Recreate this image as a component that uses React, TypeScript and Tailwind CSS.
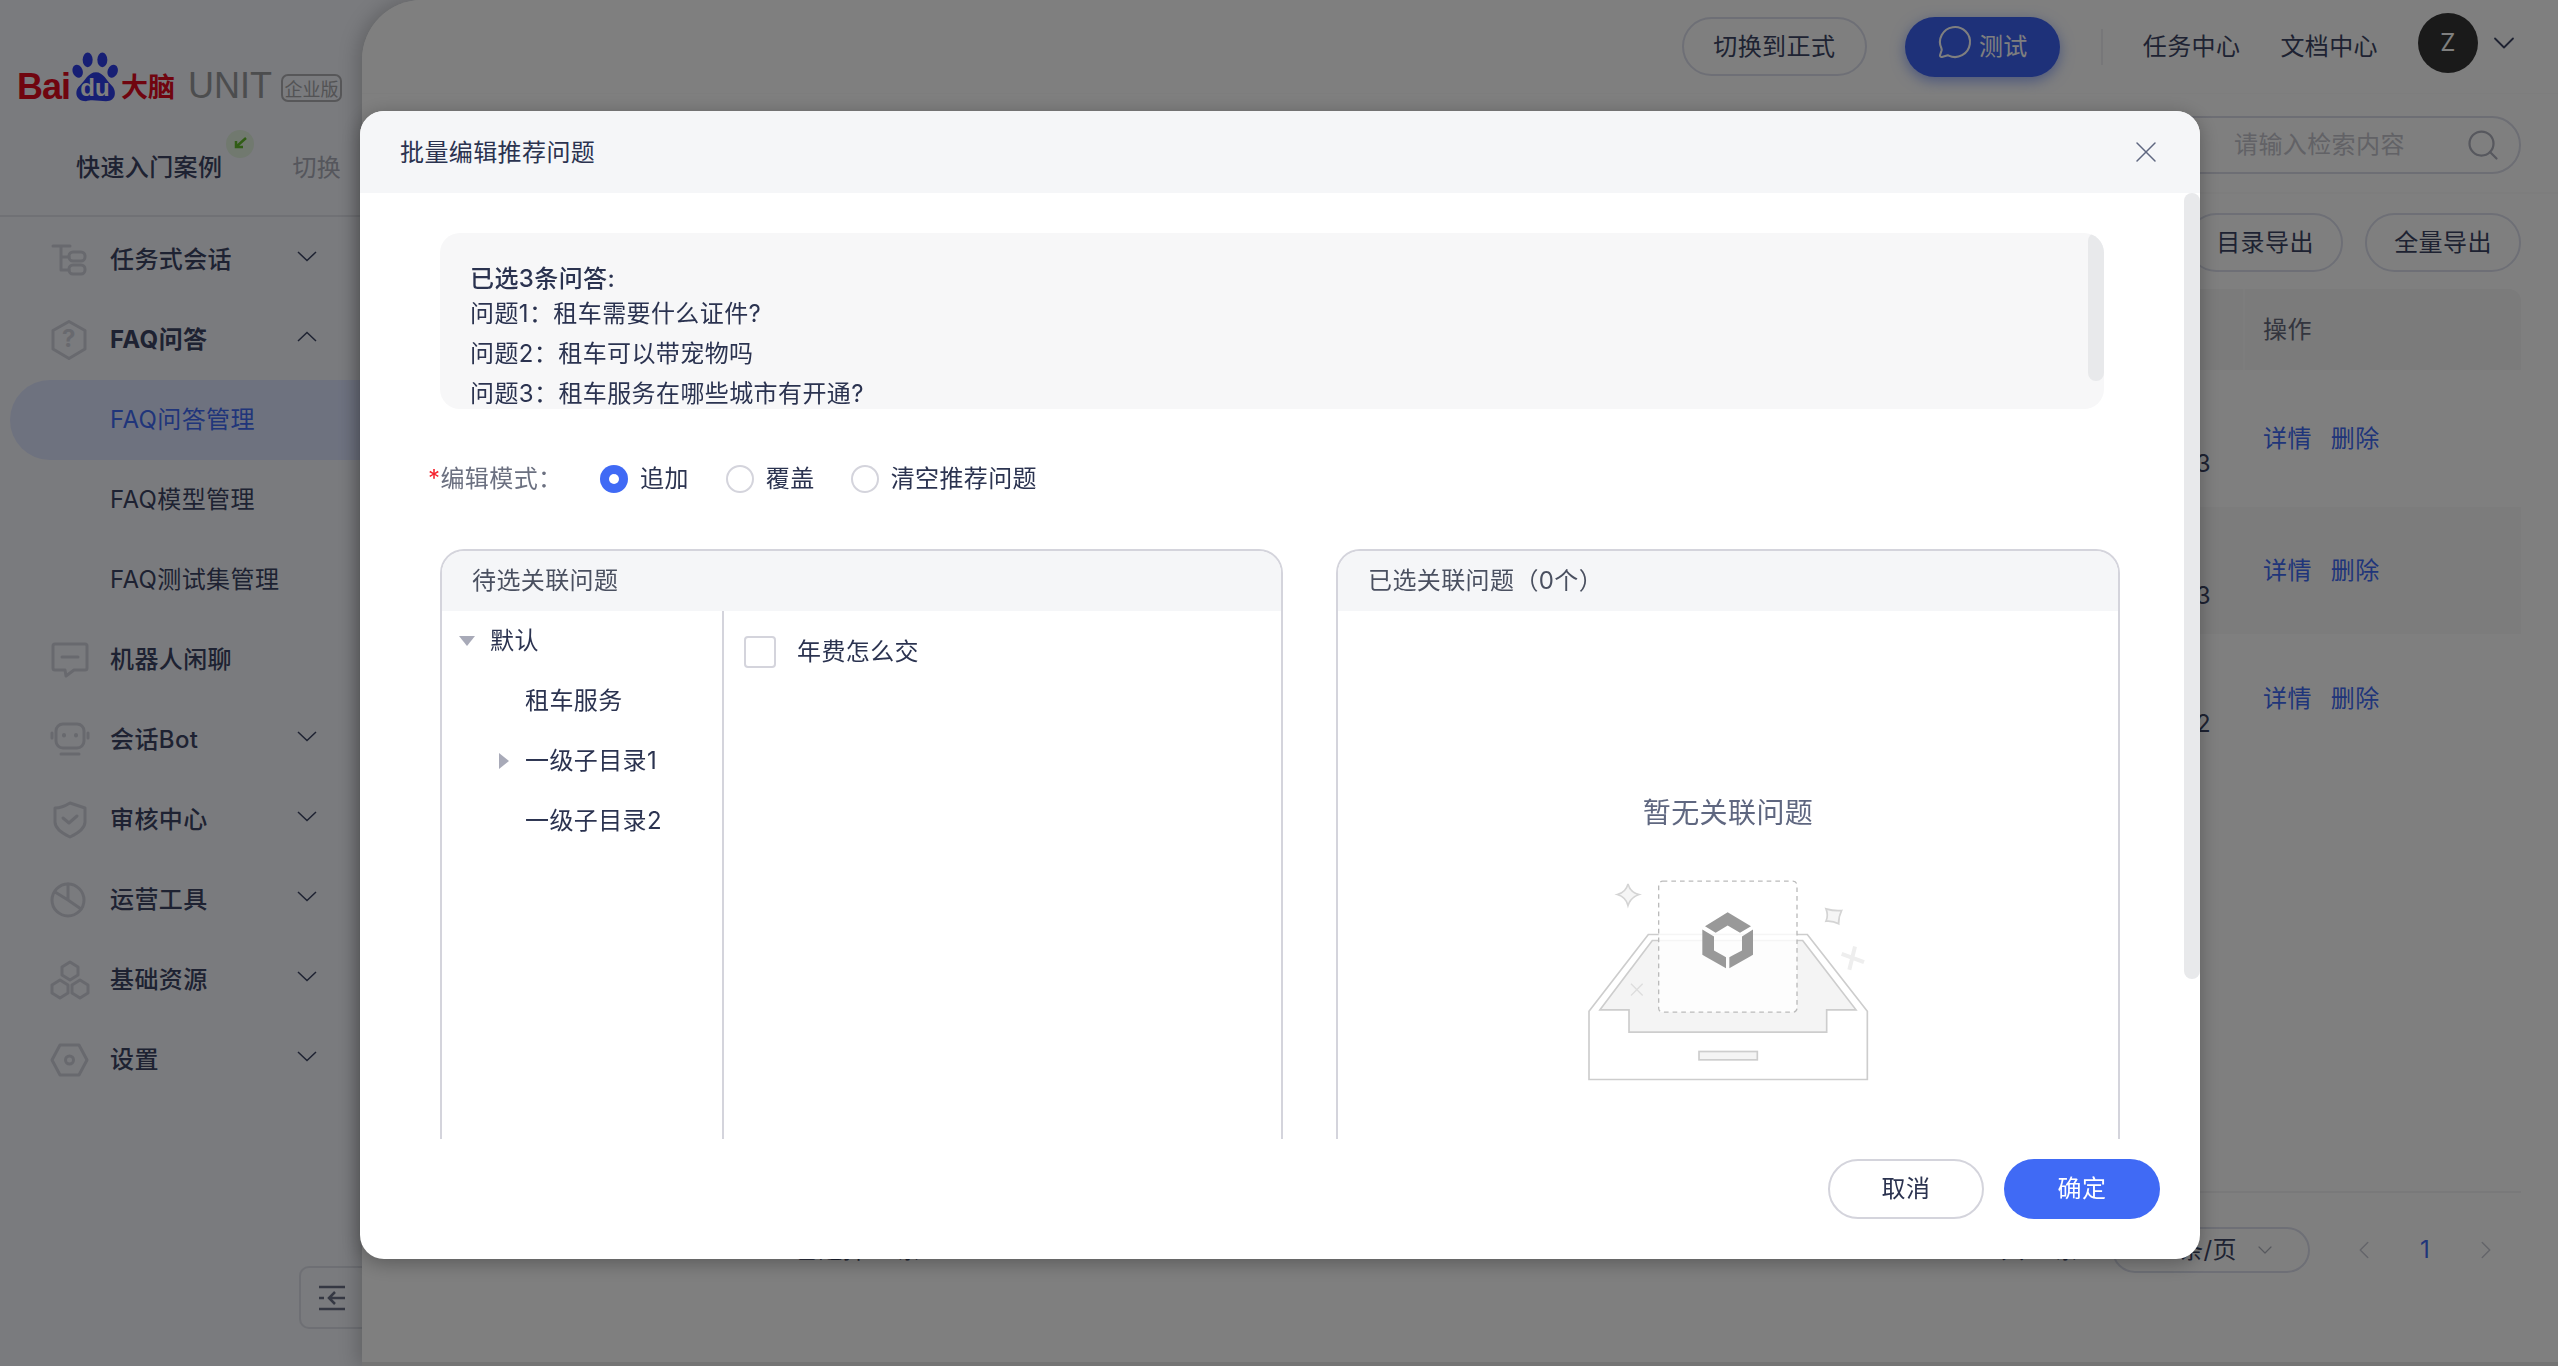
import { ChevronDown, ChevronLeft, ChevronRight, MessageCircle, Search, X } from "lucide-react";
import type { ReactNode } from "react";

const iconStroke = "#d0d2dc";

function Chev({ up = false }: { up?: boolean }) {
  return (
    <svg width="20" height="11" viewBox="0 0 20 11" fill="none" className="-mt-2 shrink-0">
      <path d={up ? "M1 10L10 1.5L19 10" : "M1 1L10 9.5L19 1"} stroke="#3c4564" strokeWidth="1.5" />
    </svg>
  );
}

function MenuIcon({ children }: { children: ReactNode }) {
  return (
    <svg width="40" height="40" viewBox="0 0 40 40" fill="none" stroke={iconStroke} strokeWidth="3" strokeLinejoin="round" strokeLinecap="round">
      {children}
    </svg>
  );
}

const icons: Record<string, ReactNode> = {
  task: (
    <MenuIcon>
      <path d="M3 6H20M11 6V30H19M11 17H19" />
      <rect x="19" y="12" width="16" height="9" rx="4" />
      <rect x="19" y="25" width="16" height="9" rx="4" />
    </MenuIcon>
  ),
  faq: (
    <MenuIcon>
      <path d="M19 1.5L35 10.5V29L19 38.5L3 29V10.5Z" />
      <text x="19" y="27" textAnchor="middle" fontSize="24" fontWeight="700" fill={iconStroke} stroke="none">?</text>
    </MenuIcon>
  ),
  chat: (
    <MenuIcon>
      <path d="M5 4H35Q37 4 37 6V28Q37 30 35 30H24L16 36L15 30H5Q3 30 3 28V6Q3 4 5 4Z" />
      <path d="M12 17H28" />
    </MenuIcon>
  ),
  bot: (
    <MenuIcon>
      <rect x="6" y="4" width="28" height="24" rx="7" />
      <path d="M2 13V18M38 13V18M11 34H29" />
      <path d="M14 15V15.5M26 15V15.5" strokeWidth="4" />
    </MenuIcon>
  ),
  shield: (
    <MenuIcon>
      <path d="M20 3L35 8V22Q35 30 20 37Q5 30 5 22V8Q12 8 20 3Z" />
      <path d="M13 18L19 23L27 16" />
    </MenuIcon>
  ),
  pie: (
    <MenuIcon>
      <circle cx="18" cy="20" r="16" />
      <path d="M18 4V20L5 12M18 20L31 29" />
    </MenuIcon>
  ),
  base: (
    <MenuIcon>
      <path d="M20 2L28 7V15L20 20L12 15V7Z" />
      <path d="M10 20L18 25V33L10 38L2 33V25Z" />
      <path d="M30 20L38 25V33L30 38L22 33V25Z" />
    </MenuIcon>
  ),
  set: (
    <MenuIcon>
      <path d="M10 5H29L37 20L29 35H10L2 20Z" />
      <circle cx="19.5" cy="20" r="4" />
    </MenuIcon>
  ),
};

type MenuRow = { label: string; icon?: string; bold?: boolean; chev?: "up" | "down"; active?: boolean };

const menu: MenuRow[] = [
  { label: "任务式会话", icon: "task", chev: "down" },
  { label: "FAQ问答", icon: "faq", chev: "up", bold: true },
  { label: "FAQ问答管理", active: true },
  { label: "FAQ模型管理" },
  { label: "FAQ测试集管理" },
  { label: "机器人闲聊", icon: "chat" },
  { label: "会话Bot", icon: "bot", chev: "down" },
  { label: "审核中心", icon: "shield", chev: "down" },
  { label: "运营工具", icon: "pie", chev: "down" },
  { label: "基础资源", icon: "base", chev: "down" },
  { label: "设置", icon: "set", chev: "down" },
];

function Logo() {
  return (
    <div className="flex items-end pl-[17px] pt-[50px] h-[110px] tracking-normal [font-family:'Liberation_Sans',sans-serif]">
      <span className="text-[36px] leading-[36px] font-bold tracking-[-1px] text-[#e10a1e] mb-[5px]">Bai</span>
      <svg width="46" height="51" viewBox="216 62 138 152" className="mb-[8px] ml-[2px]">
        <ellipse cx="263" cy="88" rx="15" ry="22" fill="#2f3ee8" />
        <ellipse cx="307" cy="88" rx="15" ry="22" fill="#2f3ee8" />
        <ellipse cx="233" cy="122" rx="15" ry="20" transform="rotate(-20 233 122)" fill="#2f3ee8" />
        <ellipse cx="338" cy="122" rx="15" ry="20" transform="rotate(20 338 122)" fill="#2f3ee8" />
        <path d="M288 125C310 125 320 150 335 165C350 180 350 212 318 212C300 212 275 205 258 212C225 212 222 180 240 165C255 150 265 125 288 125Z" fill="#2f3ee8" />
        <text x="285" y="197" textAnchor="middle" fontSize="72" fontWeight="700" fill="#ffffff" fontFamily="Liberation Sans">du</text>
      </svg>
      <span className="text-[27px] leading-[36px] font-bold text-[#e10a1e] mb-[6px] ml-[3px] [font-family:'Noto_Sans_CJK_SC',sans-serif]">大脑</span>
      <span className="text-[36px] leading-[36px] text-[#999a9c] ml-[13px] mb-[6px]">UNIT</span>
      <span className="ml-[9px] mb-[8px] h-[28px] w-[61px] rounded-[7px] border-2 border-[#aeaeb2] text-[18px] leading-[24px] text-center text-[#a6a6aa] [font-family:'Noto_Sans_CJK_SC',sans-serif]">企业版</span>
    </div>
  );
}

function Sidebar() {
  return (
    <aside className="w-[362px] shrink-0 h-full flex flex-col">
      <Logo />
      <div className="h-[107px] border-b-2 border-[#e0e2ea] pl-[76px] pt-[41px] flex items-start text-[24px] leading-[34px]">
        <span className="relative font-medium text-[#3c4564]">
          快速入门案例
          <span className="absolute -top-[21px] -right-[32px] w-[28px] h-[28px] rounded-full bg-[#e2f2de] flex items-center justify-center">
            <svg width="16" height="16" viewBox="0 0 16 16" fill="none" stroke="#62bb2c" strokeWidth="2.5">
              <path d="M14 2L5 10M4 5V11H11" />
            </svg>
          </span>
        </span>
        <span className="ml-[70px] text-[#aaacb8]">切换</span>
      </div>
      <nav className="flex flex-col pt-[3px]">
        {menu.map((m) => (
          <div key={m.label} className={m.active ? "h-[80px] flex items-center ml-[10px] pl-[100px] rounded-l-full bg-[#dce4ff]" : "h-[80px] flex items-center pl-[50px] pr-[45px]"}>
            {m.icon ? <span className="w-[60px] shrink-0 flex">{icons[m.icon]}</span> : !m.active && <span className="w-[60px] shrink-0" />}
            <span className={`text-[24px] ${m.active ? "text-[#406af5]" : "text-[#3c4564]"} ${m.bold ? "font-bold" : m.icon ? "font-medium" : ""}`}>{m.label}</span>
            {m.chev && <span className="ml-auto flex"><Chev up={m.chev === "up"} /></span>}
          </div>
        ))}
      </nav>
      <div className="mt-auto mb-[37px] self-end w-[63px] h-[63px] border-2 border-r-0 border-[#dcdfe8] rounded-l-[10px] flex items-center justify-center">
        <svg width="28" height="26" viewBox="0 0 28 26" fill="none" stroke="#6b7086" strokeWidth="2.5">
          <path d="M1 2H27M1 13H6M12 13H27M17 7L11 13L17 19M1 24H27" />
        </svg>
      </div>
    </aside>
  );
}

function OutlineBtn({ children, className = "" }: { children: ReactNode; className?: string }) {
  return <button className={`h-[59px] rounded-full border-2 border-[#dcdfec] text-[24px] text-[#3c4564] ${className}`}>{children}</button>;
}

const rows = [
  { h: "h-[137px]", val: "3" },
  { h: "h-[127px] bg-[#f8f8f8]", val: "3" },
  { h: "h-[130px]", val: "2" },
];

function Main() {
  return (
    <main className="relative flex-1 min-w-0 h-full bg-white rounded-tl-[60px] shadow-[-4px_0_20px_rgba(0,0,0,0.22)] flex flex-col overflow-hidden">
      <header className="h-[93px] shrink-0 flex items-center justify-end pr-[44px] text-[24px] text-[#3c4564] bg-[#fefefe]">
        <OutlineBtn className="w-[185px]">切换到正式</OutlineBtn>
        <button className="ml-[38px] w-[155px] h-[60px] rounded-full bg-[#3d62f3] text-white flex items-center justify-center gap-[6px] shadow-[0_4px_14px_rgba(64,106,245,0.55)]">
          <MessageCircle size={36} strokeWidth={1.4} className="-mt-[9px]" />
          测试
        </button>
        <span className="ml-[41px] w-[2px] h-[36px] bg-[#efeff3]" />
        <span className="ml-[40px]">任务中心</span>
        <span className="ml-[40px]">文档中心</span>
        <span className="ml-[40px] w-[60px] h-[60px] -mt-[8px] rounded-full bg-[#353535] text-white flex items-center justify-center">Z</span>
        <ChevronDown size={36} strokeWidth={1.2} className="ml-[8px] mr-[-8px] -mt-[8px] text-[#3c4564]" />
      </header>

      <div className="h-[99px] shrink-0 border-t border-[#fafafa] pr-[37px] pt-[22px] flex justify-end">
        <div className="w-[360px] h-[58px] rounded-full border-2 border-[#dadce8] pl-[71px] pr-[18px] flex items-center justify-between text-[24px] text-[#c4c4cc]">
          请输入检索内容
          <Search size={36} strokeWidth={1.5} className="text-[#aeb0bc]" />
        </div>
      </div>

      <div className="flex-1 min-h-0 border-t-2 border-[#fafafa] pl-[40px] pr-[37px] pt-[19px] flex flex-col">
        <div className="flex justify-end gap-[22px]">
          <OutlineBtn className="w-[156px]">目录导出</OutlineBtn>
          <OutlineBtn className="w-[156px]">全量导出</OutlineBtn>
        </div>
        <div className="mt-[17px] grid grid-cols-[1fr_278px] h-[81px] bg-[#f6f6f6] rounded-t-[12px] text-[24px] text-[#666a7c]">
          <div />
          <div className="border-l-2 border-[#fbfbfb] pl-[18px] flex items-center">操作</div>
        </div>
        {rows.map((r, i) => (
          <div key={i} className={`grid grid-cols-[1fr_278px] ${r.h} text-[24px]`}>
            <div className="flex items-center justify-end pt-[50px] pr-[32px] text-[#3c4564]">{r.val}</div>
            <div className="pl-[20px] flex items-center gap-[19px] text-[#406af5]">
              <span>详情</span>
              <span>删除</span>
            </div>
          </div>
        ))}
        <div className="mt-auto border-b-2 border-[#f3f3f5]" />
      </div>

      <div className="h-[169px] shrink-0 pl-[40px] pr-[57px] pt-[34px] flex items-start text-[24px] text-[#3c4564]">
        <span className="ml-[392px] leading-[46px]">已选择 3 条</span>
        <span className="ml-auto leading-[46px]">共 3 条</span>
        <div className="ml-[33px] w-[198px] h-[46px] rounded-full border-2 border-[#dcdfec] flex items-center justify-end pr-[31px] gap-[16px]">
          10 条/页
          <ChevronDown size={24} strokeWidth={1.2} className="text-[#aeb0bc]" />
        </div>
        <div className="ml-[39px] h-[46px] flex items-center text-[#c8cad4]">
          <ChevronLeft size={30} strokeWidth={1.2} />
          <span className="w-[92px] text-center text-[#406af5]">1</span>
          <ChevronRight size={30} strokeWidth={1.2} />
        </div>
      </div>
      <div className="h-[4px] shrink-0 bg-[#e8e8e8]" />
    </main>
  );
}

function Radio({ label, on = false }: { label: string; on?: boolean }) {
  return (
    <label className="flex items-center gap-[12px] text-[24px] text-[#2b3350]">
      {on ? (
        <span className="w-[28px] h-[28px] rounded-full bg-[#406af5] flex items-center justify-center">
          <span className="w-[10px] h-[10px] rounded-full bg-white" />
        </span>
      ) : (
        <span className="w-[28px] h-[28px] rounded-full border-2 border-[#d4d4dc]" />
      )}
      {label}
    </label>
  );
}

function Tri({ dir }: { dir: "down" | "right" }) {
  return dir === "down" ? (
    <span className="w-0 h-0 border-x-[8px] border-x-transparent border-t-[10px] border-t-[#a8aab8]" />
  ) : (
    <span className="w-0 h-0 border-y-[8px] border-y-transparent border-l-[10px] border-l-[#a8aab8]" />
  );
}

function EmptyArt() {
  return (
    <svg width="300" height="207" viewBox="114 290 900 620" fill="none" className="mt-[44px]">
      <path d="M147 692L325 462H802L982 692V897H147Z" stroke="#cdcdcd" strokeWidth="5" fill="#ffffff" />
      <path d="M180 688L337 480H788L948 688H860V755H267V688Z" stroke="#cdcdcd" strokeWidth="5" fill="#f4f4f4" />
      <rect x="477" y="813" width="175" height="25" stroke="#cdcdcd" strokeWidth="5" fill="#f4f4f4" />
      <path d="M273 610L308 645M308 610L273 645" stroke="#dddddd" strokeWidth="4" />
      <rect x="356" y="302" width="415" height="393" rx="12" fill="#ffffff" fillOpacity="0.8" stroke="#bbbbbb" strokeWidth="4" strokeDasharray="14 12" />
      <path d="M563 395L633 437L600 457L563 435L527 457L495 437Z" fill="#999999" />
      <path d="M487 447L522 468V510L558 530V563L487 523Z" fill="#999999" />
      <path d="M639 447L606 468V510L568 530V563L639 523Z" fill="#999999" />
      <path d="M264 310Q270 335 297 342Q272 350 264 375Q258 350 232 342Q258 335 264 310Z" stroke="#d4d4d4" strokeWidth="5" fill="#f5f5f5" />
      <path d="M858 385Q882 392 905 390Q895 410 896 430Q878 420 858 422Q866 405 858 385Z" stroke="#d4d4d4" strokeWidth="5" fill="#f5f5f5" />
      <path d="M905 520L972 545M945 498L928 568" stroke="#eeeeee" strokeWidth="12" />
    </svg>
  );
}

function BatchModal() {
  return (
    <div className="fixed inset-0 bg-black/50">
      <div className="absolute left-[360px] top-[111px] w-[1840px] h-[1148px] rounded-[24px] bg-white shadow-[0_4px_20px_rgba(0,0,0,0.3)] flex flex-col overflow-hidden">
        <div className="h-[82px] shrink-0 bg-[#f5f6f8] pl-[40px] pr-[36px] flex items-center justify-between">
          <span className="pt-[2px] text-[24px] text-[#2b3350]">批量编辑推荐问题</span>
          <X size={36} strokeWidth={1} className="text-[#5f6780]" />
        </div>

        <div className="relative flex-1 min-h-0 overflow-hidden pl-[68px]">
          <span className="absolute right-0 top-0 w-[16px] h-[786px] rounded-full bg-[#e8e9eb]" />

          <div className="relative ml-[12px] mt-[40px] w-[1664px] h-[176px] rounded-[20px] bg-[#f7f7f8] overflow-hidden pl-[30px] pt-[31px] text-[24px] text-[#2b3350]">
            <span className="absolute right-0 top-0 w-[16px] h-[148px] rounded-full bg-[#e8e9eb]" />
            <p className="leading-[30px] font-medium">已选3条问答:</p>
            <p className="leading-[40px]">问题1：租车需要什么证件?</p>
            <p className="leading-[40px]">问题2：租车可以带宠物吗</p>
            <p className="leading-[40px]">问题3：租车服务在哪些城市有开通?</p>
          </div>

          <div className="mt-[50px] h-[40px] flex items-center text-[24px]">
            <span className="w-[172px] text-[#6b7080]">
              <span className="text-[#f5222d]">*</span>编辑模式：
            </span>
            <Radio label="追加" on />
            <span className="w-[37px]" />
            <Radio label="覆盖" />
            <span className="w-[36px]" />
            <Radio label="清空推荐问题" />
          </div>

          <div className="mt-[50px] ml-[12px] flex gap-[53px] text-[24px] text-[#2b3350]">
            <section className="w-[843px] h-[700px] rounded-t-[24px] border-2 border-b-0 border-[#d4d4dc] flex flex-col">
              <div className="h-[60px] shrink-0 rounded-t-[22px] bg-[#f5f6f8] pl-[30px] flex items-center text-[#4a5060]">待选关联问题</div>
              <div className="flex-1 flex min-h-0">
                <div className="w-[282px] shrink-0 border-r-2 border-[#d4d4dc]">
                  <div className="h-[60px] pl-[17px] flex items-center gap-[15px]">
                    <Tri dir="down" />
                    默认
                  </div>
                  <div className="h-[60px] pl-[83px] flex items-center">租车服务</div>
                  <div className="h-[60px] pl-[57px] flex items-center gap-[16px]">
                    <Tri dir="right" />
                    一级子目录1
                  </div>
                  <div className="h-[60px] pl-[83px] flex items-center">一级子目录2</div>
                </div>
                <div className="pl-[20px] pt-[23px]">
                  <label className="flex items-center gap-[21px]">
                    <span className="w-[32px] h-[32px] rounded-[4px] border-2 border-[#d4d4dc]" />
                    年费怎么交
                  </label>
                </div>
              </div>
            </section>

            <section className="w-[784px] h-[700px] rounded-t-[24px] border-2 border-b-0 border-[#d4d4dc] flex flex-col">
              <div className="h-[60px] shrink-0 rounded-t-[22px] bg-[#f5f6f8] pl-[30px] flex items-center text-[#4a5060]">已选关联问题（0个）</div>
              <div className="flex-1 flex flex-col items-center pt-[182px]">
                <span className="text-[28px] leading-[40px] text-[#5f6780]">暂无关联问题</span>
                <EmptyArt />
              </div>
            </section>
          </div>
        </div>

        <div className="h-[120px] shrink-0 pt-[20px] pr-[40px] flex justify-end gap-[20px] text-[24px]">
          <button className="w-[156px] h-[60px] rounded-full border-2 border-[#d4d4dc] text-[#2b3350]">取消</button>
          <button className="w-[156px] h-[60px] rounded-full bg-[#406af5] text-white">确定</button>
        </div>
      </div>
    </div>
  );
}

export default function App() {
  return (
    <div className="h-screen w-full overflow-hidden flex bg-[#f4f6fc] tracking-[0.4px] [font-family:Inter,'Noto_Sans_CJK_SC',sans-serif]">
      <Sidebar />
      <Main />
      <BatchModal />
    </div>
  );
}
